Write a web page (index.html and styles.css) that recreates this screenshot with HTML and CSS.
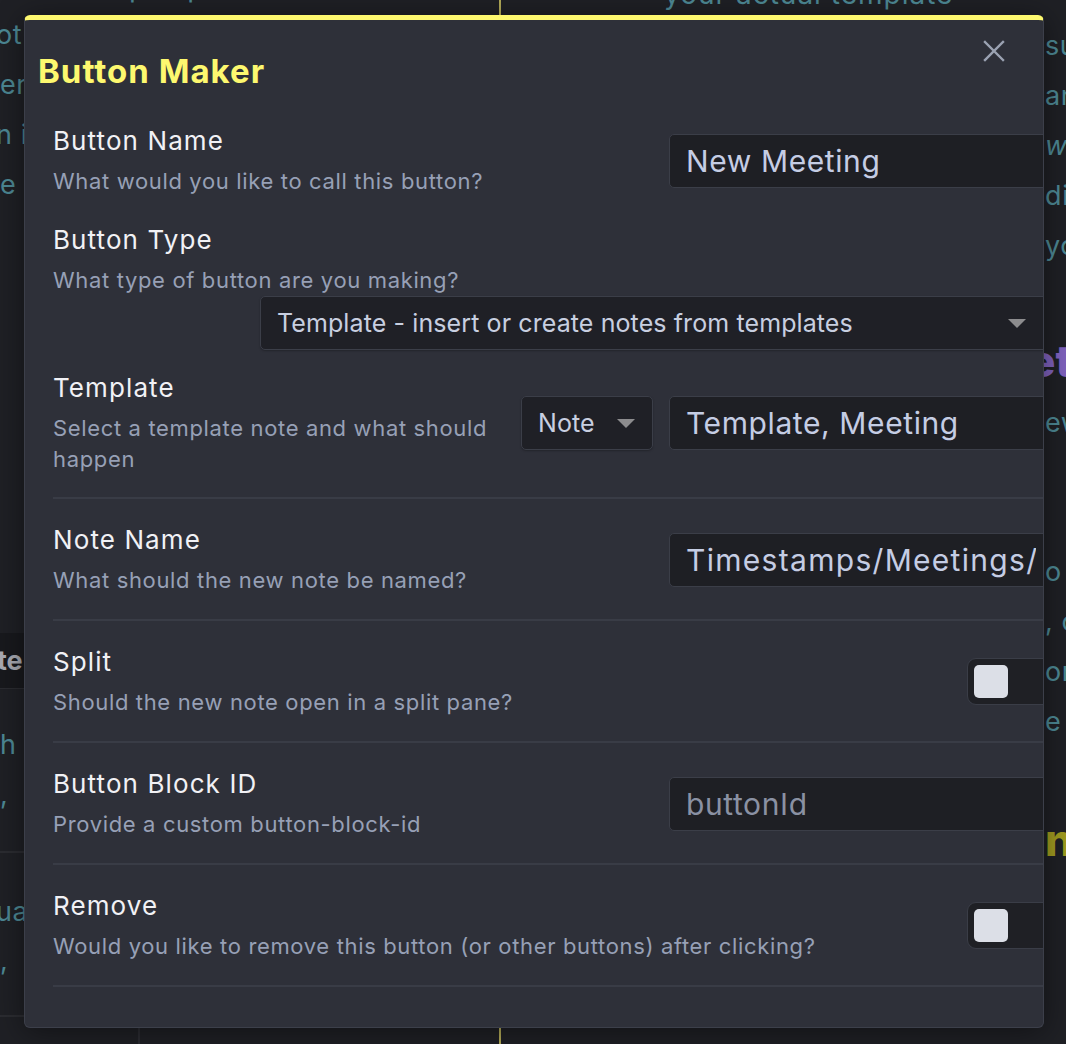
FILE: index.html
```html
<!DOCTYPE html>
<html lang="en">
<head>
<meta charset="utf-8">
<title>Button Maker</title>
<link rel="stylesheet" href="styles.css">
</head>
<body>
<div class="workspace">
  <div class="pane pane-left">
    <div class="top-text left-top"><span class="p1">p</span><span class="p2">p</span></div>
    <div class="bg-lines">
      <div class="bg-line shift">ot</div>
      <div class="bg-line">er</div>
      <div class="bg-line shift">n i</div>
      <div class="bg-line">e e</div>
    </div>
    <div class="bg-table">
      <div class="bg-th">te</div>
      <div class="bg-row">
        <div class="bg-line">h</div>
        <div class="bg-line">,</div>
      </div>
      <div class="bg-row second">
        <div class="bg-line shift">ua</div>
        <div class="bg-line">,</div>
      </div>
    </div>
    <div class="bg-foot"><span class="bg-vline"></span></div>
  </div>
  <div class="pane pane-right">
    <div class="top-text right-top">your actual template</div>
    <div class="right-lines">
      <div class="bg-line">sure</div>
      <div class="bg-line">and</div>
      <div class="bg-line ital">we</div>
      <div class="bg-line">dit</div>
      <div class="bg-line">you</div>
      <div class="bg-heading purple">etc</div>
      <div class="bg-line ew">ew</div>
      <div class="bg-line gap">o</div>
      <div class="bg-line">, c</div>
      <div class="bg-line">on</div>
      <div class="bg-line">e</div>
      <div class="bg-heading olive">n</div>
    </div>
  </div>
</div>

<div class="modal">
  <button class="modal-close" aria-label="Close">
    <svg width="22" height="22" viewBox="0 0 22 22"><path d="M2 2 L20 20 M20 2 L2 20" stroke="currentColor" stroke-width="2.4" stroke-linecap="square" fill="none"/></svg>
  </button>
  <h1 class="modal-title">Button Maker</h1>
  <div class="settings">
    <div class="setting s1">
      <div class="info">
        <div class="name">Button Name</div>
        <div class="desc">What would you like to call this button?</div>
      </div>
      <div class="control">
        <input class="text-input" type="text" value="New Meeting">
      </div>
    </div>

    <div class="setting s2">
      <div class="info wide">
        <div class="name">Button Type</div>
        <div class="desc">What type of button are you making?</div>
      </div>
      <div class="control">
        <div class="dropdown big">
          <span>Template - insert or create notes from templates</span>
          <span class="caret"></span>
        </div>
      </div>
    </div>

    <div class="setting s3">
      <div class="info narrow">
        <div class="name">Template</div>
        <div class="desc">Select a template note and what should happen</div>
      </div>
      <div class="control pair">
        <div class="dropdown small">
          <span>Note</span>
          <span class="caret"></span>
        </div>
        <input class="text-input" type="text" value="Template, Meeting">
      </div>
    </div>

    <div class="setting ruled">
      <div class="info">
        <div class="name">Note Name</div>
        <div class="desc">What should the new note be named?</div>
      </div>
      <div class="control">
        <input class="text-input wide-text" type="text" value="Timestamps/Meetings/{{date}}">
      </div>
    </div>

    <div class="setting ruled">
      <div class="info">
        <div class="name">Split</div>
        <div class="desc">Should the new note open in a split pane?</div>
      </div>
      <div class="control">
        <div class="toggle"><span class="knob"></span></div>
      </div>
    </div>

    <div class="setting ruled">
      <div class="info">
        <div class="name">Button Block ID</div>
        <div class="desc">Provide a custom button-block-id</div>
      </div>
      <div class="control">
        <input class="text-input" type="text" placeholder="buttonId">
      </div>
    </div>

    <div class="setting ruled">
      <div class="info">
        <div class="name">Remove</div>
        <div class="desc">Would you like to remove this button (or other buttons) after clicking?</div>
      </div>
      <div class="control">
        <div class="toggle"><span class="knob"></span></div>
      </div>
    </div>
  </div>
</div>
</body>
</html>
```

FILE: styles.css
```css
* { box-sizing: border-box; }

html, body {
  margin: 0;
  padding: 0;
  width: 1066px;
  height: 1044px;
  overflow: hidden;
  background: #1f2025;
  font-family: Inter, "Noto Sans", sans-serif;
}

/* ---------- backdrop document ---------- */
.workspace {
  display: flex;
  width: 1066px;
  height: 1044px;
}

.pane {
  position: relative;
  height: 100%;
  overflow: hidden;
}

.pane-left {
  width: 499px;
  display: flex;
  flex-direction: column;
}

.pane-right {
  flex: 1;
  border-left: 2px solid #b3ab58;
}

.top-text {
  color: #4d8894;
  font-size: 28px;
  line-height: 30px;
  height: 30px;
  white-space: nowrap;
  letter-spacing: 1px;
}

.left-top {
  margin-top: -28px;
  display: flex;
}

.left-top .p1 { margin-left: 129px; }
.left-top .p2 { margin-left: 40px; }

.right-top {
  margin-top: -21px;
  padding-left: 163px;
}

.bg-line {
  color: #4d8894;
  font-size: 27px;
  line-height: 50px;
  height: 50px;
  white-space: nowrap;
  letter-spacing: 0.6px;
}

.bg-line.shift { margin-left: -4px; }
.bg-line.ital { font-style: italic; }

.bg-lines {
  margin-top: 8px;
}

.bg-table {
  margin-top: 423px;
  display: flex;
  flex-direction: column;
}

.bg-th {
  height: 56px;
  line-height: 56px;
  background: #18191d;
  color: #a9abb3;
  font-weight: 700;
  font-size: 27px;
  text-indent: -3px;
  border-bottom: 1px solid #2b2c31;
}

.bg-row {
  padding: 31px 0 31px;
  border-bottom: 2px solid #2b2c31;
}

.bg-row.second {
  padding: 34px 0 30px;
}

.bg-row.second .bg-line + .bg-line {
  height: 48px;
  line-height: 48px;
}

.bg-foot {
  flex: 1;
  display: flex;
}

.bg-vline {
  margin-left: 138px;
  width: 2px;
  background: #2b2c32;
}

.right-lines {
  margin-top: 12px;
  padding-left: 544px;
}

.bg-line.ew { margin-top: 7px; }
.bg-line.gap { margin-top: 99px; }

.bg-heading {
  font-size: 44px;
  font-weight: 800;
  line-height: 60px;
  height: 60px;
  margin-top: 60px;
  white-space: nowrap;
}

.bg-heading.purple { color: #7f62bd; margin-left: -16px; }
.bg-heading.olive { color: #a09b20; margin-top: 63px; }

/* ---------- modal ---------- */
.modal {
  position: absolute;
  left: 24px;
  top: 15px;
  width: 1020px;
  height: 1013px;
  background: #2e3039;
  border: 1px solid #3c3f4a;
  border-top: 5px solid #fdf86f;
  border-radius: 6px;
  overflow: hidden;
  padding: 31px 0 0 13px;
  box-shadow: 0 4px 30px rgba(0, 0, 0, 0.45);
}

.modal-close {
  position: absolute;
  top: 20px;
  right: 38px;
  width: 22px;
  height: 22px;
  padding: 0;
  border: 0;
  background: none;
  color: #9ba2b2;
  display: flex;
}

.modal-title {
  margin: 0;
  font-size: 33px;
  line-height: 40px;
  font-weight: 700;
  color: #fdf86f;
  letter-spacing: 1px;
}

.settings {
  margin-top: 20px;
  margin-left: 15px;
  width: 1000px;
  display: flex;
  flex-direction: column;
}

.setting {
  display: flex;
  align-items: center;
  gap: 16px;
}

.s1 { padding: 13px 0; }
.s2 { padding: 13px 0 8px; flex-wrap: wrap; row-gap: 0; }
.s3 { padding: 13px 0 22px; border-bottom: 2px solid #393c46; }

.ruled {
  padding: 24px 0 23px;
  border-bottom: 2px solid #393c46;
}

.info {
  flex: 1 1 auto;
  min-width: 0;
}

.info.wide { flex: 0 0 100%; }
.info.narrow { flex: 0 0 452px; }

.name {
  font-size: 26px;
  line-height: 34px;
  color: #f1f1f5;
  letter-spacing: 1.1px;
}

.desc {
  margin-top: 8px;
  font-size: 22px;
  line-height: 31px;
  color: #97a0b6;
  letter-spacing: 0.65px;
}

.control {
  flex: 0 0 auto;
  margin-left: auto;
  display: flex;
  align-items: center;
  gap: 16px;
}

.text-input {
  width: 384px;
  height: 54px;
  padding: 0 16px;
  font-family: inherit;
  font-size: 30px;
  letter-spacing: 0.6px;
  color: #c5cde4;
  background: #1e1f24;
  border: 1px solid #3b3e48;
  border-radius: 5px;
  outline: none;
}

.text-input.wide-text {
  letter-spacing: 1.3px;
}

.text-input::placeholder {
  color: #8a91a3;
}

.dropdown {
  height: 54px;
  display: flex;
  align-items: center;
  justify-content: space-between;
  padding: 0 17px 0 16px;
  background: #1f2026;
  border: 1px solid #3b3e48;
  border-radius: 5px;
  color: #c8cfe0;
  font-size: 25px;
  letter-spacing: 0.1px;
  box-shadow: 0 1px 2px rgba(0, 0, 0, 0.25);
}

.dropdown.big {
  width: 793px;
  padding-right: 26px;
}

.dropdown.small {
  width: 132px;
}

.caret {
  width: 0;
  height: 0;
  border-left: 9px solid transparent;
  border-right: 9px solid transparent;
  border-top: 9px solid #8c8c8e;
}

.toggle {
  width: 86px;
  height: 47px;
  padding: 6px 6px;
  background: #1f2025;
  border: 1px solid #3a3d47;
  border-radius: 9px;
  display: flex;
  align-items: center;
}

.knob {
  width: 34px;
  height: 33px;
  background: #dcdfe7;
  border-radius: 5px;
}
```
